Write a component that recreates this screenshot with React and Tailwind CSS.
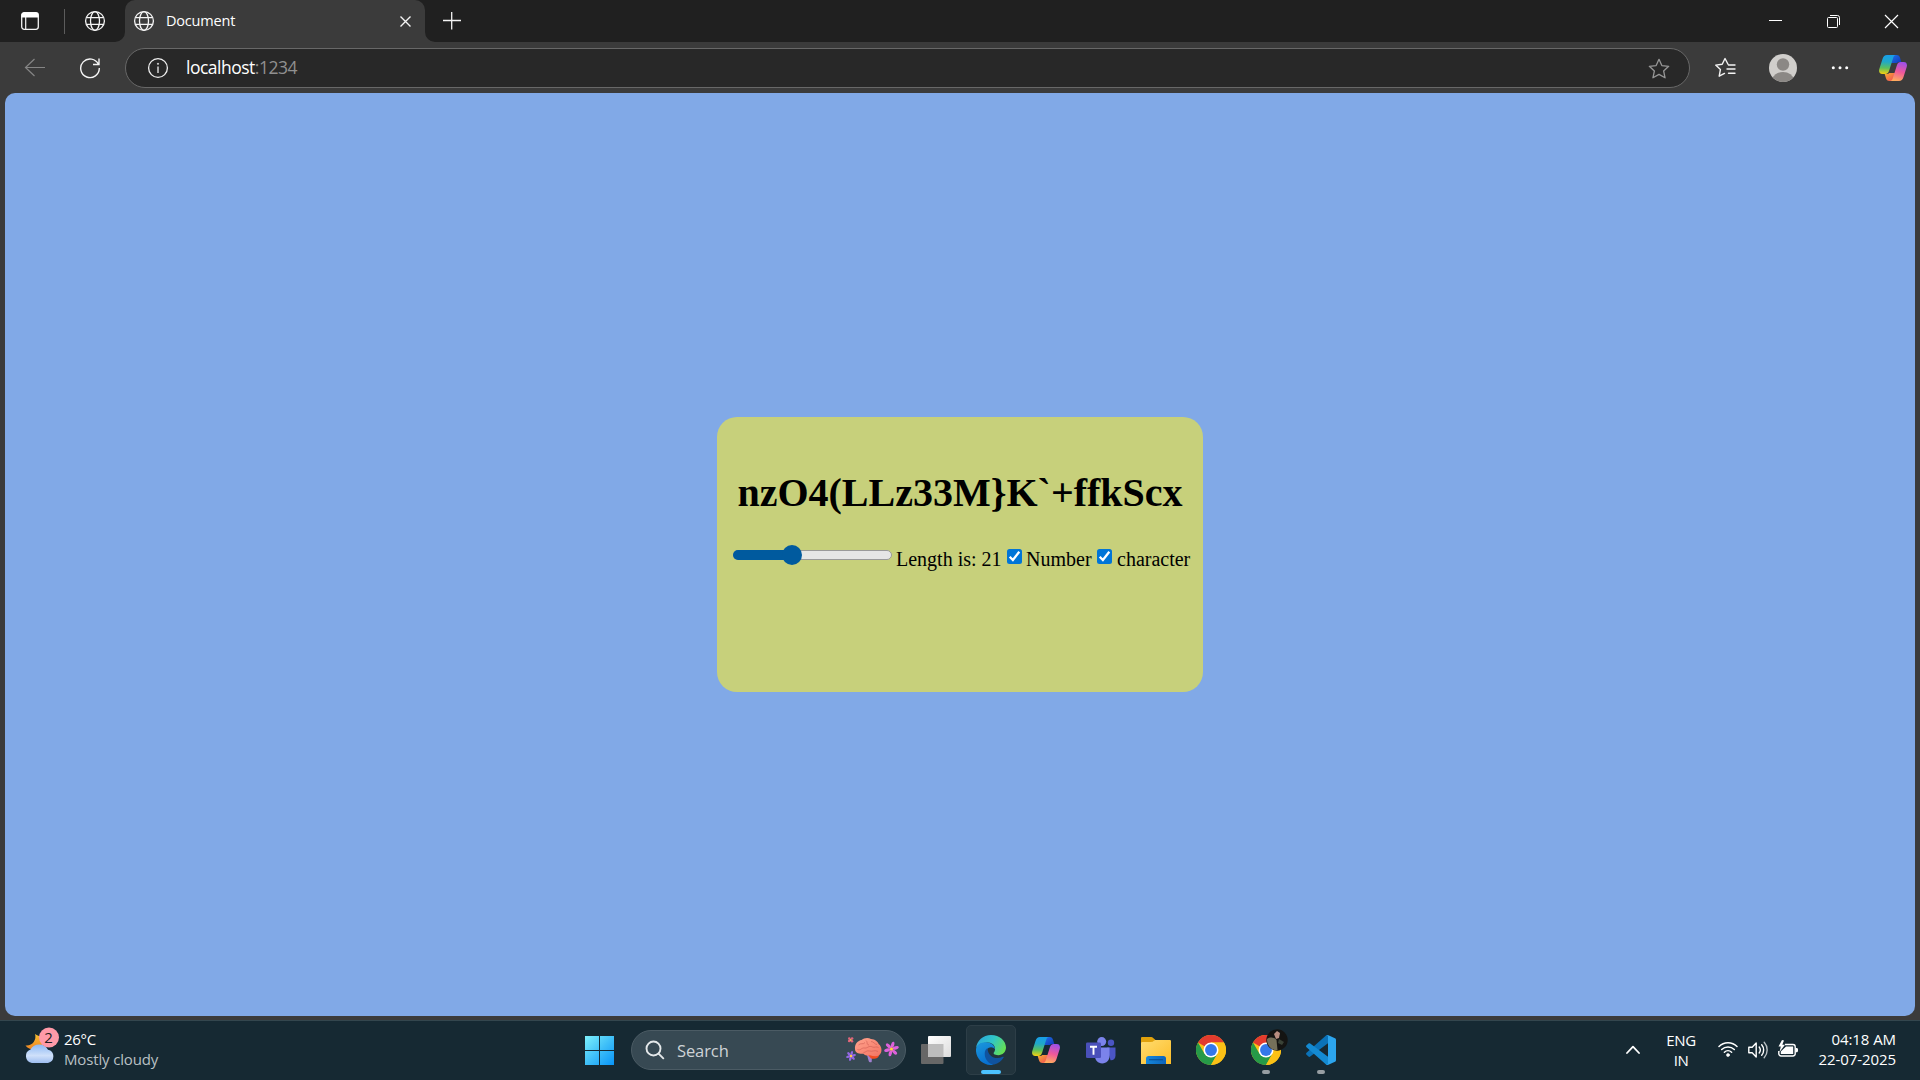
import React, { useId } from "react";

const Globe = () => (
  <svg width="22" height="22" viewBox="0 0 22 22" fill="none" stroke="#f4f4f4" strokeWidth="1.3">
    <circle cx="11" cy="11" r="9.4" />
    <ellipse cx="11" cy="11" rx="4.5" ry="9.4" />
    <path d="M2.4 7.7h17.2M2.4 14.3h17.2" />
  </svg>
);

function Copilot() {
  const id = useId().replace(/[^a-zA-Z0-9]/g, "");
  return (
    <svg width="28" height="26" viewBox="0 0 28 26">
      <defs>
        <linearGradient id={id + "l"} x1="0.3" y1="0" x2="0.25" y2="1">
          <stop offset="0" stopColor="#189ee8" />
          <stop offset=".35" stopColor="#20a8c8" />
          <stop offset=".68" stopColor="#5cc05c" />
          <stop offset="1" stopColor="#f8d010" />
        </linearGradient>
        <linearGradient id={id + "r"} x1="0.6" y1="0" x2="0.35" y2="1">
          <stop offset="0" stopColor="#a050e8" />
          <stop offset=".5" stopColor="#f0589a" />
          <stop offset="1" stopColor="#ffae5c" />
        </linearGradient>
        <linearGradient id={id + "t"} x1="0" y1="0" x2="1" y2="1">
          <stop offset="0" stopColor="#2070e8" />
          <stop offset="1" stopColor="#1038b8" />
        </linearGradient>
        <linearGradient id={id + "b"} x1="0" y1="0" x2="1" y2="1">
          <stop offset="0" stopColor="#f8b030" />
          <stop offset="1" stopColor="#f04858" />
        </linearGradient>
      </defs>
      <path d="M13 0h4.500c2.200 0 3 1 3.600 3l1.200 4h-2c-1.200 0-2 .4-2.500 1.100H12z" fill={`url(#${id}t)`} />
      <path d="M15 26h-4.500c-2.200 0-3-1-3.600-3l-1.200-4h2c1.200 0 2-.4 2.500-1.100H16z" fill={`url(#${id}b)`} />
      <path d="M8 0h9c-1.500 0-2.200 1-2.700 2.500L10 16c-.7 2-1.800 3-3.800 3H3.300C.6 19-.5 17 .3 14L3.500 4C4.300 1.300 5.700 0 8 0z" fill={`url(#${id}l)`} />
      <path d="M20 26h-9c1.500 0 2.200-1 2.700-2.500L18 10c.7-2 1.800-3 3.800-3h2.900c2.700 0 3.800 2 3 5l-3.200 10c-.8 2.700-2.200 4-4.500 4z" fill={`url(#${id}r)`} />
    </svg>
  );
}

const Chrome = () => (
  <svg width="30" height="30" viewBox="0 0 48 48">
    <circle cx="24" cy="24" r="24" fill="#fbc116" />
    <path d="M24 24 3.200 12A24 24 0 0 1 44.800 12H24z" fill="#e33b2e" />
    <path d="M3.200 12A24 24 0 0 0 24 48l10.400-18L24 24l-10.400 6z" fill="#269a48" />
    <path d="M24 48A24 24 0 0 0 44.800 12H24l10.400 18z" fill="#fbc116" />
    <circle cx="24" cy="24" r="12" fill="#fff" />
    <circle cx="24" cy="24" r="9.500" fill="#3478ea" />
  </svg>
);

const Edge = () => (
  <svg width="30" height="30" viewBox="0 0 30 30">
    <defs>
      <linearGradient id="edgeTop" x1="0" y1="0.2" x2="1" y2="0.6">
        <stop offset="0" stopColor="#2aa6dc" />
        <stop offset=".5" stopColor="#30c5c8" />
        <stop offset="1" stopColor="#66e052" />
      </linearGradient>
      <linearGradient id="edgeLeft" x1="0" y1="0" x2="0.4" y2="1">
        <stop offset="0" stopColor="#1b98dc" />
        <stop offset="1" stopColor="#0870d0" />
      </linearGradient>
    </defs>
    <path d="M0 13.500C.8 5.500 7 0 15 0c8.800 0 15 6 15 12.600 0 4.500-3.500 7.600-7.700 7.600-4.300 0-5.200-1.700-4.400-2.600 2.600-3 1.200-10-6.400-10C5 7.600 1 10.500 0 13.500z" fill="url(#edgeTop)" />
    <path d="M0 14.200C.4 10 4.500 7.200 9.500 7.200c5.500 0 9.200 3 9.500 7-1.600-2.500-6-3-8 .2-3 5 .5 12.600 7 14.400-1 .8-2 1.200-3.400 1.200C6 30-.6 22.500 0 14.200z" fill="url(#edgeLeft)" />
    <path d="M11.500 13c-1.500 1-2.800 2.700-2.800 5.800 0 6 5 11 9.500 10.800 4-.8 7.300-3.500 9.400-7 .4-.8-.2-1.200-.9-.8-6.500 3.200-14.800.5-15.200-8.800z" fill="#10539f" />
  </svg>
);

const Brain = () => (
  <svg width="54" height="28" viewBox="0 0 54 28">
    <defs>
      <linearGradient id="brain" x1="0" y1="0" x2="1" y2="1">
        <stop offset="0" stopColor="#ffa48e" />
        <stop offset="1" stopColor="#f47462" />
      </linearGradient>
      <linearGradient id="petal" gradientUnits="userSpaceOnUse" x1="39" y1="6" x2="51" y2="18">
        <stop offset="0" stopColor="#d45ce8" />
        <stop offset="1" stopColor="#f86cc0" />
      </linearGradient>
    </defs>
    <path d="M21 18l5 0-.3 7c-1.300.8-2.700.2-3-1z" fill="#a080d0" />
    <path d="M22 18h11c0 3-4 4.500-8 3.500z" fill="#f24c22" />
    <path d="M9 12C8.500 7 12 3.500 15.500 3 18 .6 22.500.3 25 2c4 .3 6.800 2.600 7.600 5 3.500 2.500 4 8.500.6 11.200-2.500 1.600-6 1-9.200 0-3 1-5.500 0-6.500-1.400C13 17.200 9 16 9 12z" fill="url(#brain)" />
    <path d="M12.500 8c2-2.500 5 0 6.500-2.500M20 3.500c2 1.500 0 4 3 4.500M25 4.500c3 0 3.500 3 6 3M11.500 12.500c3 1.500 4-2 7-1.500 3.500.5 4-3 8-1 2 1 4-1 6 .5M17.500 15.500c2.500 0 3-2.500 6-1.500s5-1.500 8.500.5" fill="none" stroke="#cc5a52" strokeWidth=".6" />
    <g fill="url(#petal)">
      <ellipse cx="45.500" cy="7.700" rx="1.600" ry="3.200" transform="rotate(15 45.500 12)" />
      <ellipse cx="45.500" cy="7.700" rx="1.600" ry="3.200" transform="rotate(75 45.500 12)" />
      <ellipse cx="45.500" cy="7.700" rx="1.600" ry="3.200" transform="rotate(135 45.500 12)" />
      <ellipse cx="45.500" cy="7.700" rx="1.600" ry="3.200" transform="rotate(195 45.500 12)" />
      <ellipse cx="45.500" cy="7.700" rx="1.600" ry="3.200" transform="rotate(255 45.500 12)" />
      <ellipse cx="45.500" cy="7.700" rx="1.600" ry="3.200" transform="rotate(315 45.500 12)" />
    </g>
    <circle cx="45.500" cy="12" r="1.600" fill="#ffd23c" />
    <g fill="#9468e4">
      <ellipse cx="5" cy="16.300" rx="1.200" ry="2.400" transform="rotate(15 5 19)" />
      <ellipse cx="5" cy="16.300" rx="1.200" ry="2.400" transform="rotate(75 5 19)" />
      <ellipse cx="5" cy="16.300" rx="1.200" ry="2.400" transform="rotate(135 5 19)" />
      <ellipse cx="5" cy="16.300" rx="1.200" ry="2.400" transform="rotate(195 5 19)" />
      <ellipse cx="5" cy="16.300" rx="1.200" ry="2.400" transform="rotate(255 5 19)" />
      <ellipse cx="5" cy="16.300" rx="1.200" ry="2.400" transform="rotate(315 5 19)" />
    </g>
    <circle cx="5" cy="19" r="1.200" fill="#ffd23c" />
    <g fill="#e0647c">
      <circle cx="3.300" cy="1.600" r="1.300" />
      <circle cx="6.100" cy="1.500" r="1.300" />
      <circle cx="3.200" cy="4" r="1.300" />
      <circle cx="6" cy="4.300" r="1.300" />
    </g>
    <circle cx="4.700" cy="2.900" r="1" fill="#ffb45a" />
  </svg>
);

const VSCode = () => (
  <svg width="30" height="30" viewBox="0 0 30 30">
    <path d="M22 0v8.200L4.200 21.500c-.6.500-1.200.5-1.700 0L.5 19.700c-.6-.6-.6-1.300 0-1.900L20 .6c.6-.5 1.300-.7 2-.6z" fill="#0b72b8" />
    <path d="M22 30v-8.200L4.200 8.500c-.6-.5-1.200-.5-1.700 0L.5 10.300c-.6.600-.6 1.300 0 1.900L20 29.400c.6.500 1.300.7 2 .6z" fill="#148ad2" />
    <path d="M21.800 0 29 3.300c.6.300 1 .8 1 1.500v20.400c0 .7-.4 1.200-1 1.500L21.800 30c-.8.200-1.400 0-2-.6 1 .7 2.200.2 2.200-1V1.600c0-1.200-1.200-1.700-2.200-1 .6-.6 1.200-.8 2-.6z" fill="#2ca5ee" />
  </svg>
);

const Teams = () => (
  <svg width="30" height="27" viewBox="0 0 30 27">
    <circle cx="25" cy="5.700" r="3.200" fill="#4b55c4" />
    <path d="M21 10.500h8.500v8c0 3-2 5-5 4.700z" fill="#4b55c4" />
    <circle cx="15.700" cy="4.600" r="4.500" fill="#7b83eb" />
    <path d="M9 10.500h14.500v8.300c0 4.600-3 7.600-7.300 7.600S9 23.400 9 18.800z" fill="#7b83eb" />
    <rect y="5.500" width="15" height="15.500" rx="1.300" fill="#4a50ba" />
    <path d="M4 9.700h7M7.500 9.700v8" stroke="#fff" strokeWidth="1.900" fill="none" />
  </svg>
);

const Folder = () => (
  <svg width="30" height="27" viewBox="0 0 30 27">
    <defs>
      <linearGradient id="folder" x1="0" y1="0" x2="1" y2="1">
        <stop offset="0" stopColor="#ffdc70" />
        <stop offset="1" stopColor="#fcbd28" />
      </linearGradient>
      <linearGradient id="folderBlue" x1="0" y1="0" x2="1" y2="0">
        <stop offset="0" stopColor="#1688dc" />
        <stop offset="1" stopColor="#0c64bc" />
      </linearGradient>
    </defs>
    <path d="M0 1.200C0 .5.500 0 1.200 0h9c.8 0 1.400.3 2 .9L14.500 3H29v6H0z" fill="#e0a10c" />
    <path d="M0 6.300c0-.7.500-1.300 1.300-1.300h9c1 0 1.500-.3 2.200-.9l.9-.7c.5-.3.900-.4 1.500-.4h13.800c.8 0 1.300.5 1.300 1.300V27H0z" fill="url(#folder)" />
    <path d="M5 27v-5.500c0-1.600 1-2.500 2.500-2.500h15c1.500 0 2.500.9 2.500 2.500V27z" fill="url(#folderBlue)" />
    <path d="M8.500 22.700h13" stroke="#084a8c" strokeWidth="1.100" strokeLinecap="round" />
  </svg>
);

const Check = () => (
  <span className="h-[15px] w-[15px] shrink-0 rounded-[2.500px] bg-[#0075d7]">
    <svg width="15" height="15" viewBox="0 0 15 15" fill="none" stroke="#fff" strokeWidth="2.300">
      <path d="m2.700 7.700 3.200 3.300 6.400-8.300" />
    </svg>
  </span>
);

const starPath = "M10 1.200l2.600 5.700 6.200.7-4.600 4.200 1.300 6.200L10 14.900 4.500 18l1.300-6.200L1.200 7.600l6.200-.7z";

function TaskButton({ children, active, running }) {
  return (
    <div className={`relative flex h-[50px] w-[50px] items-center justify-center rounded-[5px] ${active ? "border border-[#2d3e47] bg-[#22343d]" : ""}`}>
      {children}
      {active && <span className="absolute bottom-0 left-[14px] h-1 w-5 rounded-full bg-[#4cc2ff]" />}
      {running && <span className="absolute bottom-px left-[21px] h-1 w-2 rounded-full bg-[#979ea3]" />}
    </div>
  );
}

function TitleBar() {
  return (
    <div className="flex h-[42px] items-start bg-[#202020]">
      <svg className="ml-[21px] mt-3" width="18" height="18" viewBox="0 0 18 18">
        <rect x=".7" y=".7" width="16.600" height="16.600" rx="2.500" fill="none" stroke="#f4f4f4" strokeWidth="1.300" />
        <path d="M.5 5.500V3A2.500 2.500 0 0 1 3 .5h12A2.500 2.500 0 0 1 17.500 3v2.500z" fill="#fff" />
        <path d="M4.700 5v12" stroke="#f4f4f4" strokeWidth="1.200" />
      </svg>
      <div className="ml-[25px] mt-[9px] h-[25px] w-px bg-[#5c5c5c]" />
      <div className="ml-[19px] mt-[10px]"><Globe /></div>
      <svg className="ml-[9px] mt-8" width="10" height="10" viewBox="0 0 10 10"><path d="M10 0v10H0A10 10 0 0 0 10 0z" fill="#3b3b3b" /></svg>
      <div className="flex h-[42px] w-[300px] items-center rounded-t-[10px] bg-[#3b3b3b]">
        <div className="ml-2"><Globe /></div>
        <span className="ml-[11px] w-[220px] text-[14.500px] leading-5 tracking-[-0.200px] text-white">Document</span>
        <svg className="ml-[13px] mt-[1px]" width="13" height="13" viewBox="0 0 13 13" stroke="#f4f4f4" strokeWidth="1.400"><path d="m1.500 1.500 10 10m0-10-10 10" /></svg>
      </div>
      <svg className="mt-8" width="10" height="10" viewBox="0 0 10 10"><path d="M0 0v10h10A10 10 0 0 1 0 0z" fill="#3b3b3b" /></svg>
      <svg className="ml-[7px] mt-[11px]" width="20" height="20" viewBox="0 0 20 20" stroke="#f4f4f4" strokeWidth="1.300"><path d="M1 9.500h18M9.700 1v17.500" /></svg>
      <div className="ml-auto mr-[21px] mt-[14px] flex gap-[43px]">
        <svg width="15" height="15" viewBox="0 0 15 15" stroke="#fff" strokeWidth="1"><path d="M1 6.500h13" /></svg>
        <svg width="15" height="15" viewBox="0 0 15 15" stroke="#fff" strokeWidth="1" fill="none">
          <rect x="1.500" y="3.500" width="10" height="10" rx="1" /><path d="M4 1.500h7.500a2 2 0 0 1 2 2V11" />
        </svg>
        <svg width="15" height="15" viewBox="0 0 15 15" stroke="#fff" strokeWidth="1.200"><path d="m1 1 13 13m0-13L1 14" /></svg>
      </div>
    </div>
  );
}

function Toolbar() {
  return (
    <div className="flex h-[51px] items-start bg-[#3b3b3b]">
      <svg className="ml-6 mt-[15px]" width="22" height="22" viewBox="0 0 22 22" fill="none" stroke="#858585" strokeWidth="1.200"><path d="M21 10.500H1.500M10.500 2l-9 8.500 9 8.500" /></svg>
      <svg className="ml-[33px] mt-[15px]" width="22" height="22" viewBox="0 0 22 22" fill="none" stroke="#f4f4f4" strokeWidth="1.400">
        <path d="M19.500 7.500A9.300 9.300 0 1 0 20.300 11M20 1.500v6h-6" />
      </svg>
      <div className="ml-6 mt-1.5 flex h-10 w-[1565px] items-center rounded-full border border-[#686868] bg-[#282828]">
        <svg className="ml-[21px]" width="22" height="22" viewBox="0 0 22 22" fill="none" stroke="#f0f0f0" strokeWidth="1.300">
          <circle cx="11" cy="11" r="9.400" /><path d="M11 9.500V16" /><circle cx="11" cy="6.800" r=".6" fill="#f0f0f0" strokeWidth=".8" />
        </svg>
        <span className="mb-0.5 ml-[17px] text-[17.500px] leading-6 tracking-[-0.500px] text-white">localhost<span className="text-[#909090]">:1234</span></span>
        <svg className="ml-auto mr-[19px] mt-px" width="22" height="22" viewBox="0 0 20 20" fill="none" stroke="#969696" strokeWidth="1.200" strokeLinejoin="round"><path d={starPath} /></svg>
      </div>
      <svg className="ml-6 mt-[15px]" width="22" height="22" viewBox="0 0 22 22" fill="none" stroke="#f4f4f4" strokeWidth="1.400" strokeLinejoin="round" strokeLinecap="round">
        <path d="M14 7.300 11 1.500 8.200 7.200l-6.500.9 4.700 4.500-1.200 6.600 5.300-2.800M14.500 8h6.500M13 12h8M14.500 16.200h6.500" />
      </svg>
      <svg className="ml-[33px] mt-3" width="28" height="28" viewBox="0 0 28 28">
        <defs><clipPath id="avatar"><circle cx="14" cy="14" r="14" /></clipPath></defs>
        <g clipPath="url(#avatar)"><rect width="28" height="28" fill="#d0cecb" /><circle cx="14" cy="10.500" r="6.200" fill="#8b8885" /><ellipse cx="14" cy="25.500" rx="10.500" ry="7.500" fill="#8b8885" /></g>
      </svg>
      <svg className="ml-[34px] mt-6" width="18" height="4" viewBox="0 0 18 4" fill="#fff"><circle cx="2.300" cy="1.800" r="1.500" /><circle cx="9" cy="1.800" r="1.500" /><circle cx="15.700" cy="1.800" r="1.500" /></svg>
      <div className="ml-[30px] mt-[13px]"><Copilot /></div>
    </div>
  );
}

function PasswordCard() {
  return (
    <div className="flex h-[275px] w-[486px] flex-col items-center rounded-[20px] bg-[#c7d07b] font-['Liberation_Serif',serif] text-black">
      <h1 className="mt-[53px] text-[40px] font-bold leading-[46px] whitespace-nowrap">{"nzO4(LLz33M}K`+ffkScx"}</h1>
      <div className="mt-[25px] flex h-[30px] w-full items-start pl-4 text-[20px] leading-[23px] whitespace-nowrap">
        <div className="relative mt-[9px] h-[10px] w-[159px] shrink-0 rounded-full border border-[#9a9a9a] bg-[#e6e6e6]">
          <div className="absolute -left-px -top-px h-[10px] w-[59px] rounded-l-full bg-[#005a9e]" />
          <div className="absolute -top-[6px] left-[48px] h-5 w-5 rounded-full bg-[#005a9e]" />
        </div>
        <label className="ml-1 mt-[7px] w-[105px]">Length is: 21</label>
        <span className="ml-[6px] mt-2 flex"><Check /></span>
        <label className="ml-1 mt-[7px] w-[67px]">Number</label>
        <span className="ml-[4px] mt-2 flex"><Check /></span>
        <label className="ml-[5px] mt-[7px]">character</label>
      </div>
    </div>
  );
}

function Taskbar() {
  return (
    <div className="flex h-[60px] border-t border-[#34464e] bg-[#162933] text-white">
      <div className="flex w-[574px] shrink-0 items-start pl-6 pt-[6px]">
        <svg width="36" height="38" viewBox="0 0 36 38">
          <defs>
            <linearGradient id="cloud" x1="0" y1="0" x2="0" y2="1"><stop offset="0" stopColor="#8db9f4" /><stop offset=".6" stopColor="#cfe0fa" /><stop offset="1" stopColor="#9dbdf0" /></linearGradient>
            <linearGradient id="moon" x1="0" y1="0" x2="0" y2="1"><stop offset="0" stopColor="#f8c030" /><stop offset="1" stopColor="#ef8424" /></linearGradient>
          </defs>
          <path d="M11 7c2 6-3 12.500-9.500 11.500C5 24 16 24 20 18V9c-3 1-6 0-9-2z" fill="url(#moon)" />
          <path d="M8 36a7 7 0 0 1-1.500-13.500A10 10 0 0 1 24 22.700 6.800 6.800 0 0 1 24 36z" fill="url(#cloud)" />
          <circle cx="25" cy="10.500" r="10" fill="#ff9aa8" />
          <text x="24.500" y="16" textAnchor="middle" fontSize="15" fontFamily="Open Sans, sans-serif" fill="#202020">2</text>
        </svg>
        <div className="ml-1 mt-[2px] text-[15px] leading-5">
          <div className="tracking-[-0.300px]">26°C</div>
          <div className="tracking-[-0.150px] text-[#b9c0c4]">Mostly cloudy</div>
        </div>
      </div>
      <div className="flex items-center pb-px">
        <TaskButton>
          <svg width="29" height="29" viewBox="0 0 29 29">
            <defs><linearGradient id="win" x1="0" y1="0" x2="29" y2="29" gradientUnits="userSpaceOnUse"><stop offset="0" stopColor="#7df0fc" /><stop offset=".5" stopColor="#40c0f8" /><stop offset="1" stopColor="#0894f8" /></linearGradient></defs>
            <path d="M0 0h14v14H0zM15 0h14v14H15zM0 15h14v14H0zM15 15h14v14H15z" fill="url(#win)" />
          </svg>
        </TaskButton>
        <div className="ml-[7px] mr-[5px] flex h-10 w-[275px] items-center rounded-full border border-[#4b5b64] bg-[#374953]">
          <svg className="ml-[13px]" width="20" height="20" viewBox="0 0 20 20" fill="none" stroke="#e4e8ea" strokeWidth="1.900" strokeLinecap="round"><circle cx="8.500" cy="8.500" r="7" /><path d="m13.600 13.600 4.700 4.700" /></svg>
          <span className="ml-3 mt-0.5 text-[16.500px] leading-6 tracking-[-0.100px] text-[#ced3d6]">Search</span>
          <div className="ml-auto mr-[5px] mt-0.5"><Brain /></div>
        </div>
        <div className="flex gap-[5px]">
          <TaskButton>
            <svg width="30" height="28" viewBox="0 0 30 28">
              <defs><linearGradient id="tv" x1="0" y1="0" x2="1" y2="1"><stop offset="0" stopColor="#fff" /><stop offset="1" stopColor="#dcdcdc" /></linearGradient></defs>
              <rect y="8" width="22.500" height="20" rx="1" fill="#676767" /><rect x="7" width="23" height="21" rx="1" fill="url(#tv)" /><path d="M7 8h15.500v13H8a1 1 0 0 1-1-1z" fill="#bdbdbd" />
            </svg>
          </TaskButton>
          <TaskButton active><Edge /></TaskButton>
          <TaskButton><Copilot /></TaskButton>
          <TaskButton><Teams /></TaskButton>
          <TaskButton><Folder /></TaskButton>
          <TaskButton><Chrome /></TaskButton>
          <TaskButton running>
            <Chrome />
            <svg className="absolute left-[25px] top-[4px]" width="22" height="22" viewBox="0 0 22 22">
              <circle cx="11" cy="11" r="10.700" fill="#141412" /><path d="M1 10c3-2 7-2 9.500 1l1 10C6 22 1 17 1 10z" fill="#75705a" /><path d="M8 5l3-3 3 2-1 5-3 1z" fill="#b98e80" /><path d="M13 10l5 3-2 3-4-2z" fill="#3a4236" />
            </svg>
          </TaskButton>
          <TaskButton running><VSCode /></TaskButton>
        </div>
      </div>
      <div className="ml-auto flex items-start pr-6 text-[15px] leading-5">
        <svg className="mt-6" width="14" height="10" viewBox="0 0 14 10" fill="none" stroke="#fff" strokeWidth="1.800" strokeLinecap="round" strokeLinejoin="round"><path d="m1 8 6-6.300L13 8" /></svg>
        <div className="ml-[24px] mt-[9px] w-[34px] text-center tracking-[-0.400px]"><div>ENG</div><div>IN</div></div>
        <svg className="ml-[20px] mt-[19px]" width="20" height="18" viewBox="0 0 20 18" fill="none" stroke="#fff" strokeWidth="1.500" strokeLinecap="round">
          <path d="M1 6.500a12.500 12.500 0 0 1 18 0M3.700 9.500a9 9 0 0 1 12.600 0M6.400 12.300a5.200 5.200 0 0 1 7.200 0" /><circle cx="10" cy="15" r="1.500" fill="#fff" strokeWidth=".6" />
        </svg>
        <svg className="ml-[10px] mt-[20px]" width="20" height="18" viewBox="0 0 20 18" fill="none" stroke="#fff" strokeWidth="1.400" strokeLinecap="round" strokeLinejoin="round">
          <path d="M.8 6.200h3.400l4-4.200v14l-4-4.200H.8zM11.200 6a5 5 0 0 1 0 6M13.700 3.700a8.200 8.200 0 0 1 0 10.600" /><path d="M16.200 1.300a11.500 11.500 0 0 1 0 15.400" stroke="#b7bec2" />
        </svg>
        <svg className="ml-[10px] mt-[19px]" width="20" height="18" viewBox="0 0 20 18">
          <path d="M7 4.500h8a2.200 2.200 0 0 1 2.200 2.200v7A2.200 2.200 0 0 1 15 16H3a2.200 2.200 0 0 1-2.200-2.200V11" fill="none" stroke="#fff" strokeWidth="1.400" /><path d="M17.500 8h1c1 0 1.500.7 1.500 1.500v1.300c0 .9-.5 1.500-1.500 1.500h-1z" fill="#fff" />
          <path d="M8 6.500h7.200V14H2.800v-2.500z" fill="#fff" /><path d="M4 0 .5 6.500h2.300L1.500 12 7 4.800H4.300L6 .5z" fill="#fff" />
        </svg>
        <div className="ml-[19px] mt-[8px] w-[79px] text-right tracking-[-0.080px] whitespace-nowrap"><div className="-ml-2">04:18 AM</div><div className="-ml-2">22-07-2025</div></div>
      </div>
    </div>
  );
}

export default function App() {
  return (
    <div className="flex h-[1080px] w-[1920px] flex-col overflow-hidden bg-[#3b3b3b] font-['Open_Sans','Noto_Sans',sans-serif]">
      <TitleBar />
      <Toolbar />
      <main className="mx-[5px] mb-1 flex flex-1 items-center justify-center rounded-[10px] bg-[#81a9e7]">
        <PasswordCard />
      </main>
      <Taskbar />
    </div>
  );
}
